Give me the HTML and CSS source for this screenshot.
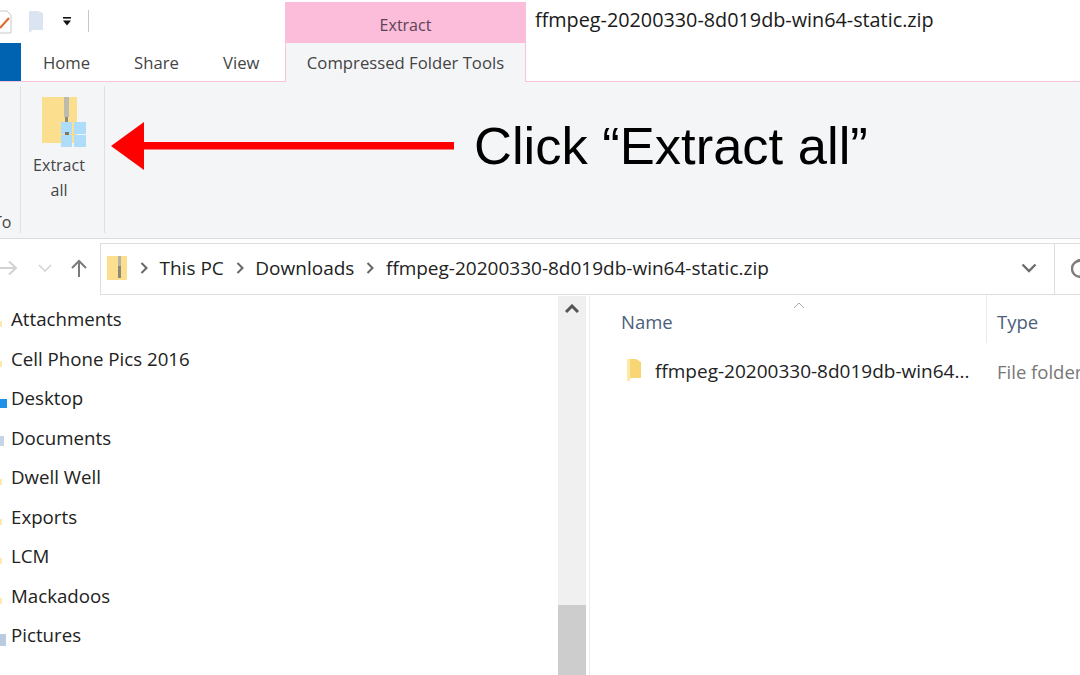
FILE: index.html
```html
<!DOCTYPE html>
<html lang="en">
<head>
<meta charset="utf-8">
<title>Extract all</title>
<link rel="stylesheet" href="styles.css">
</head>
<body>
<div class="window">
  <header class="titlebar">
    <div class="quick">
      <svg class="qa-note" width="12" height="24" viewBox="0 0 12 24"><path d="M-4 1H7L11 5V23H-4Z" fill="#fff" stroke="#c9c9c9"/><path d="M0 18L9 8" stroke="#e0662a" stroke-width="2"/></svg>
      <svg class="qa-folder" width="16" height="24" viewBox="0 0 16 24"><path d="M1 1H10L15 3V20H5L1 23Z" fill="#dbe5f1"/></svg>
      <svg class="qa-drop" width="10" height="10" viewBox="0 0 10 10"><rect x="1" y="0" width="8" height="1.6" fill="#111"/><path d="M1 3.5H9L5 8.5Z" fill="#111"/></svg>
      <span class="qa-sep"></span>
    </div>
    <div class="context-tab">Extract</div>
    <div class="title">ffmpeg-20200330-8d019db-win64-static.zip</div>
  </header>
  <nav class="tabs">
    <div class="file-tab"></div>
    <div class="tab tab-home">Home</div>
    <div class="tab tab-share">Share</div>
    <div class="tab tab-view">View</div>
    <div class="tab-active">Compressed Folder Tools</div>
  </nav>
  <section class="ribbon">
    <div class="group-prev">To</div>
    <div class="group-extract">
      <svg class="zip-large" width="46" height="50" viewBox="0 0 46 50">
        <rect x="1" y="0" width="35" height="46" fill="#fbdf8f"/>
        <rect x="23" y="0" width="5" height="20" fill="#bdbbae"/>
        <rect x="24" y="20" width="3" height="14" fill="#8d8b7c"/>
        <g fill="#aedcfb"><rect x="20" y="25" width="11" height="12"/><rect x="33" y="25" width="12" height="12"/><rect x="20" y="38" width="11" height="12"/><rect x="33" y="38" width="12" height="12"/></g>
        <rect x="24" y="35" width="4" height="3" fill="#77786f"/>
      </svg>
      <div class="extract-label">Extract<br>all</div>
    </div>
  </section>
  <section class="addressrow">
    <div class="navbtns">
      <svg width="18" height="16" viewBox="0 0 18 16" class="nav-fwd"><path d="M0 8H16M9 1.5L16 8L9 14.5" fill="none" stroke="#d2d2d2" stroke-width="2"/></svg>
      <svg width="14" height="8" viewBox="0 0 14 8" class="nav-down"><path d="M1 1L7 7L13 1" fill="none" stroke="#d4d4d4" stroke-width="1.6"/></svg>
      <svg width="16" height="18" viewBox="0 0 16 18" class="nav-up"><path d="M8 18V2M1 9L8 2L15 9" fill="none" stroke="#7b7b7b" stroke-width="2"/></svg>
    </div>
    <div class="addressbar">
      <svg class="zip-small" width="20" height="24" viewBox="0 0 20 24"><rect width="20" height="24" fill="#fbdf8f"/><rect x="11" y="0" width="3" height="10" fill="#b5b3a5"/><rect x="11" y="10" width="3" height="12" fill="#8a8877"/></svg>
      <svg class="crumb-sep" width="8" height="12" viewBox="0 0 8 12"><path d="M1.5 1L6.5 6L1.5 11" fill="none" stroke="#666" stroke-width="2"/></svg>
      <span class="crumb">This PC</span>
      <svg class="crumb-sep" width="8" height="12" viewBox="0 0 8 12"><path d="M1.5 1L6.5 6L1.5 11" fill="none" stroke="#666" stroke-width="2"/></svg>
      <span class="crumb">Downloads</span>
      <svg class="crumb-sep" width="8" height="12" viewBox="0 0 8 12"><path d="M1.5 1L6.5 6L1.5 11" fill="none" stroke="#666" stroke-width="2"/></svg>
      <span class="crumb">ffmpeg-20200330-8d019db-win64-static.zip</span>
      <svg class="addr-chevron" width="16" height="10" viewBox="0 0 16 10"><path d="M1.5 1.5L8 8L14.5 1.5" fill="none" stroke="#6d6d6d" stroke-width="2.4"/></svg>
    </div>
    <div class="refresh">
      <svg class="refresh-icon" width="16" height="22" viewBox="0 0 16 22"><path d="M14 4.5A8 8 0 1 0 14 17" fill="none" stroke="#7d7d7d" stroke-width="2.4"/><path d="M6 1H15V9Z" fill="#7d7d7d"/></svg>
    </div>
  </section>
  <main class="content">
    <aside class="navpane">
      <ul class="tree">
        <li class="tree-item"><span class="marker marker-folder"></span>Attachments</li>
        <li class="tree-item"><span class="marker marker-folder"></span>Cell Phone Pics 2016</li>
        <li class="tree-item"><span class="marker marker-desktop"></span>Desktop</li>
        <li class="tree-item"><span class="marker marker-docs"></span>Documents</li>
        <li class="tree-item"><span class="marker marker-folder"></span>Dwell Well</li>
        <li class="tree-item"><span class="marker marker-folder"></span>Exports</li>
        <li class="tree-item"><span class="marker marker-folder"></span>LCM</li>
        <li class="tree-item"><span class="marker marker-folder"></span>Mackadoos</li>
        <li class="tree-item"><span class="marker marker-pics"></span>Pictures</li>
      </ul>
      <div class="scrollbar">
        <svg class="scroll-up" width="14" height="10" viewBox="0 0 14 10"><path d="M1 8L7 2L13 8" fill="none" stroke="#555" stroke-width="3"/></svg>
        <div class="scroll-thumb"></div>
      </div>
    </aside>
    <section class="files">
      <div class="col-head">
        <div class="col-name">
          Name
          <svg class="sort" width="12" height="7" viewBox="0 0 12 7"><path d="M1 6L6 1L11 6" fill="none" stroke="#a9a9a9"/></svg>
        </div>
        <div class="col-type">Type</div>
      </div>
      <div class="file-row">
        <svg class="file-icon" width="16" height="22" viewBox="0 0 16 22"><path d="M2 0H11L16 3V19H6L2 22Z" fill="#f9d675"/><path d="M2 0H5V22H2Z" fill="#fdeaa8"/></svg>
        <span class="file-name">ffmpeg-20200330-8d019db-win64...</span>
        <span class="file-type">File folder</span>
      </div>
    </section>
  </main>
</div>
<div class="annotation">
  <svg class="arrow" width="343" height="48" viewBox="0 0 343 48"><path d="M0 24L33 0V20H343V27.5H33V48Z" fill="#fe0000"/></svg>
  <span class="callout">Click “Extract all”</span>
</div>
</body>
</html>
```
FILE: styles.css
```css
* { box-sizing: border-box; }
html, body { margin: 0; padding: 0; width: 1080px; height: 675px; overflow: hidden; background: #fff; }
body { font-family: "Open Sans", "Noto Sans", sans-serif; position: relative; color: #222; }
.window { display: flex; flex-direction: column; width: 1080px; height: 675px; }

/* title bar */
.titlebar { display: flex; height: 43px; flex: none; }
.quick { display: flex; align-items: flex-start; width: 285px; padding-top: 10px; }
.qa-note { margin-right: 16px; }
.qa-folder { margin-right: 18px; }
.qa-drop { margin: 7px 16px 0 0; }
.qa-sep { width: 1px; height: 22px; background: #c6c6c6; }
.context-tab { width: 241px; margin-top: 2px; background: #fbbdd9; color: #5c4358; font-size: 16px; line-height: 46px; text-align: center; }
.title { margin-left: 9px; font-size: 19.8px; line-height: 40px; color: #1a1a1a; white-space: nowrap; }

/* tabs */
.tabs { display: flex; height: 39px; flex: none; border-bottom: 1px solid #f8c4dc; font-size: 16.7px; color: #444; }
.file-tab { width: 21px; height: 38px; background: #0063b1; }
.tab { line-height: 39px; }
.tab-home { margin-left: 22px; width: 92px; }
.tab-share { width: 88px; margin-left: -1px; }
.tab-view { width: 63px; margin-left: 1px; }
.tab-active { width: 241px; height: 39px; background: #f4f5f7; border: 1px solid #f8c4dc; border-top: 0; border-bottom: 0; text-align: center; line-height: 39px; color: #444; margin-left: -1px; }

/* ribbon */
.ribbon { display: flex; height: 157px; flex: none; background: #f4f5f7; border-bottom: 1px solid #dcdcdc; padding-top: 4px; }
.group-prev { width: 21px; height: 147px; border-right: 1px solid #dfe0e2; font-size: 16px; color: #444; line-height: 22px; padding-top: 125px; text-indent: -7px; overflow: hidden; }
.group-extract { width: 84px; height: 147px; border-right: 1px solid #dfe0e2; display: flex; flex-direction: column; align-items: center; padding-top: 11px; }
.zip-large { margin-left: 2px; flex: none; }
.extract-label { font-size: 16px; line-height: 24.5px; text-align: center; color: #444; margin: 6px 7px 0 0; }

/* address */
.addressrow { display: flex; align-items: flex-start; height: 56px; flex: none; padding-top: 4px; }
.navbtns { display: flex; align-items: center; width: 100px; height: 52px; padding-bottom: 2px; }
.nav-fwd { margin-right: 20px; }
.nav-down { margin-right: 19px; }
.addressbar { display: flex; align-items: center; width: 955px; height: 52px; border: 1px solid #dedede; background: #fff; padding: 0 0 2px 6px; font-size: 19px; color: #222; }
.zip-small { margin-right: 13px; }
.crumb-sep { margin-right: 11.5px; flex: none; }
.crumb { margin-right: 12px; white-space: nowrap; }
.addr-chevron { margin-left: auto; margin-right: 17px; }
.refresh { width: 25px; height: 52px; border-top: 1px solid #dedede; border-bottom: 1px solid #dedede; display: flex; align-items: center; padding-left: 16px; overflow: hidden; }
.refresh-icon { flex: none; }

/* main */
.content { display: flex; flex: 1; min-height: 0; }
.navpane { display: flex; width: 590px; flex: none; border-right: 1px solid #eeeeee; }
.tree { list-style: none; margin: 0; padding: 4px 0 0 11px; width: 558px; font-size: 18.7px; color: #222; }
.tree-item { height: 39.5px; line-height: 39.5px; position: relative; white-space: nowrap; }
.marker { position: absolute; left: -11px; top: 22px; width: 2px; height: 6px; background: #fbe9b0; }
.marker-desktop { top: 21px; width: 7px; height: 9px; background: #1e90e8; }
.marker-docs { top: 18px; width: 4px; height: 10px; background: #c5d5e6; }
.marker-pics { top: 19px; width: 6px; height: 12px; background: #b8cbdf; }
.scrollbar { display: flex; flex-direction: column; width: 28px; margin-top: 1px; background: #f0f0f0; }
.scroll-up { margin: 8px 0 0 7px; }
.scroll-thumb { margin-top: auto; height: 70px; background: #cdcdcd; }

/* files */
.files { flex: 1; min-width: 0; overflow: hidden; }
.col-head { display: flex; height: 48px; color: #4c607a; font-size: 18.5px; }
.col-name { width: 397px; padding-left: 31px; line-height: 54px; border-right: 1px solid #eaeaea; position: relative; }
.sort { position: absolute; left: 203px; top: 7px; }
.col-type { padding-left: 10px; line-height: 54px; }
.file-row { display: flex; align-items: center; height: 56px; font-size: 19px; white-space: nowrap; }
.file-icon { margin-left: 35px; margin-right: 14px; flex: none; margin-top: -2px; }
.file-name { width: 342px; flex: none; color: #222; }
.file-type { color: #777; font-size: 18.5px; }

/* annotation */
.annotation { position: absolute; left: 111px; top: 122px; width: 800px; height: 48px; }
.arrow { display: block; }
.callout { position: absolute; left: 363px; top: -4px; font-family: "Liberation Sans", Arial, sans-serif; font-size: 52.5px; line-height: 56px; color: #000; white-space: nowrap; }
```
